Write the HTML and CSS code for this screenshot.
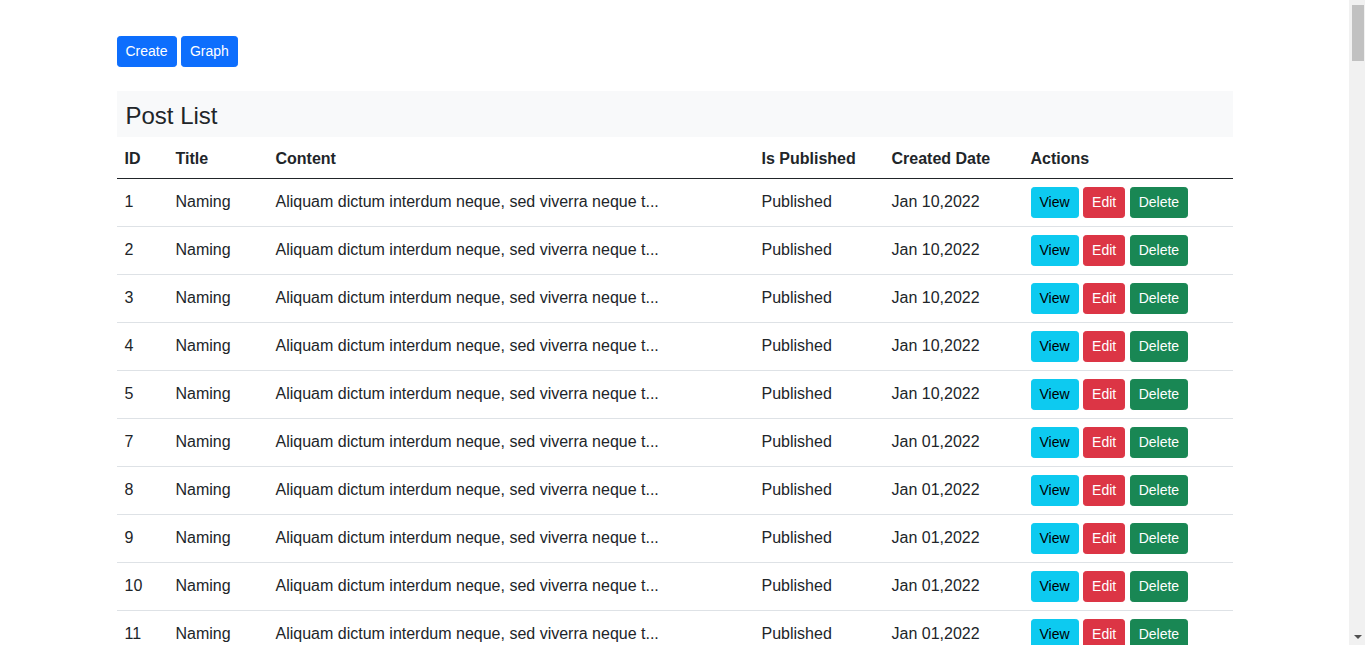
FILE: index.html
```html
<!DOCTYPE html>
<html lang="en">
<head>
<meta charset="utf-8">
<title>Post List</title>
<link rel="stylesheet" href="styles.css">
</head>
<body>
<div class="container">
  <div class="toolbar">
    <a class="btn btn-sm btn-primary" href="#">Create</a>
    <a class="btn btn-sm btn-primary" href="#">Graph</a>
  </div>
  <h4 class="panel-title">Post List</h4>
  <table class="table">
    <colgroup>
      <col class="c-id"><col class="c-title"><col class="c-content"><col class="c-pub"><col class="c-date"><col class="c-actions">
    </colgroup>
    <thead>
      <tr><th>ID</th><th>Title</th><th>Content</th><th>Is Published</th><th>Created Date</th><th>Actions</th></tr>
    </thead>
    <tbody>
      <tr><td>1</td><td>Naming</td><td>Aliquam dictum interdum neque, sed viverra neque t...</td><td>Published</td><td>Jan 10,2022</td><td><a class="btn btn-sm btn-info" href="#">View</a> <a class="btn btn-sm btn-danger" href="#">Edit</a> <a class="btn btn-sm btn-success" href="#">Delete</a></td></tr>
      <tr><td>2</td><td>Naming</td><td>Aliquam dictum interdum neque, sed viverra neque t...</td><td>Published</td><td>Jan 10,2022</td><td><a class="btn btn-sm btn-info" href="#">View</a> <a class="btn btn-sm btn-danger" href="#">Edit</a> <a class="btn btn-sm btn-success" href="#">Delete</a></td></tr>
      <tr><td>3</td><td>Naming</td><td>Aliquam dictum interdum neque, sed viverra neque t...</td><td>Published</td><td>Jan 10,2022</td><td><a class="btn btn-sm btn-info" href="#">View</a> <a class="btn btn-sm btn-danger" href="#">Edit</a> <a class="btn btn-sm btn-success" href="#">Delete</a></td></tr>
      <tr><td>4</td><td>Naming</td><td>Aliquam dictum interdum neque, sed viverra neque t...</td><td>Published</td><td>Jan 10,2022</td><td><a class="btn btn-sm btn-info" href="#">View</a> <a class="btn btn-sm btn-danger" href="#">Edit</a> <a class="btn btn-sm btn-success" href="#">Delete</a></td></tr>
      <tr><td>5</td><td>Naming</td><td>Aliquam dictum interdum neque, sed viverra neque t...</td><td>Published</td><td>Jan 10,2022</td><td><a class="btn btn-sm btn-info" href="#">View</a> <a class="btn btn-sm btn-danger" href="#">Edit</a> <a class="btn btn-sm btn-success" href="#">Delete</a></td></tr>
      <tr><td>7</td><td>Naming</td><td>Aliquam dictum interdum neque, sed viverra neque t...</td><td>Published</td><td>Jan 01,2022</td><td><a class="btn btn-sm btn-info" href="#">View</a> <a class="btn btn-sm btn-danger" href="#">Edit</a> <a class="btn btn-sm btn-success" href="#">Delete</a></td></tr>
      <tr><td>8</td><td>Naming</td><td>Aliquam dictum interdum neque, sed viverra neque t...</td><td>Published</td><td>Jan 01,2022</td><td><a class="btn btn-sm btn-info" href="#">View</a> <a class="btn btn-sm btn-danger" href="#">Edit</a> <a class="btn btn-sm btn-success" href="#">Delete</a></td></tr>
      <tr><td>9</td><td>Naming</td><td>Aliquam dictum interdum neque, sed viverra neque t...</td><td>Published</td><td>Jan 01,2022</td><td><a class="btn btn-sm btn-info" href="#">View</a> <a class="btn btn-sm btn-danger" href="#">Edit</a> <a class="btn btn-sm btn-success" href="#">Delete</a></td></tr>
      <tr><td>10</td><td>Naming</td><td>Aliquam dictum interdum neque, sed viverra neque t...</td><td>Published</td><td>Jan 01,2022</td><td><a class="btn btn-sm btn-info" href="#">View</a> <a class="btn btn-sm btn-danger" href="#">Edit</a> <a class="btn btn-sm btn-success" href="#">Delete</a></td></tr>
      <tr><td>11</td><td>Naming</td><td>Aliquam dictum interdum neque, sed viverra neque t...</td><td>Published</td><td>Jan 01,2022</td><td><a class="btn btn-sm btn-info" href="#">View</a> <a class="btn btn-sm btn-danger" href="#">Edit</a> <a class="btn btn-sm btn-success" href="#">Delete</a></td></tr>
    </tbody>
  </table>
</div>
<div class="scrollbar" aria-hidden="true">
  <div class="scroll-thumb"></div>
  <div class="scroll-arrow"></div>
</div>
</body>
</html>
```

FILE: styles.css
```css
html, body {
  margin: 0;
  padding: 0;
}
body {
  font-family: "Liberation Sans", Arial, sans-serif;
  font-size: 16px;
  line-height: 1.5;
  color: #212529;
  background: #fff;
  padding-right: 16px;
}
.container {
  max-width: 1116px;
  margin: 0 auto;
  padding: 36px 12px 0;
}
.toolbar {
  margin-bottom: 24px;
}
.btn {
  display: inline-block;
  font-size: 14px;
  line-height: 1.5;
  padding: 4px 8px;
  border: 1px solid transparent;
  border-radius: 3.2px;
  text-decoration: none;
  vertical-align: middle;
}
.btn-primary { background: #0d6efd; border-color: #0d6efd; color: #fff; }
.btn-info { background: #0dcaf0; border-color: #0dcaf0; color: #000; }
.btn-danger { background: #dc3545; border-color: #dc3545; color: #fff; }
.btn-success { background: #198754; border-color: #198754; color: #fff; }

.panel-title {
  margin: 0;
  padding: 11px 9px 6px;
  background: #f8f9fa;
  font-size: 24px;
  font-weight: 500;
  line-height: 1.2;
}
.table {
  width: 100%;
  border-collapse: collapse;
  table-layout: fixed;
  vertical-align: top;
}
.c-id { width: 51px; }
.c-title { width: 100px; }
.c-content { width: 486px; }
.c-pub { width: 130px; }
.c-date { width: 139px; }
.c-actions { width: 210px; }
.table th, .table td {
  padding: 8px;
  text-align: left;
  border-bottom: 1px solid #dee2e6;
  white-space: nowrap;
  overflow: hidden;
}
.table th {
  padding: 10px 8px 7px;
  font-weight: 700;
  border-bottom-color: #212529;
}

.scrollbar {
  position: fixed;
  top: 0;
  right: 0;
  bottom: 0;
  width: 16px;
  background: #f1f1f1;
  display: flex;
  flex-direction: column;
  align-items: center;
  justify-content: space-between;
  padding: 5px 0 6px;
  box-sizing: border-box;
}
.scroll-thumb {
  width: 12px;
  height: 56px;
  margin-left: 2px;
  background: #c1c1c1;
}
.scroll-arrow {
  width: 0;
  height: 0;
  border-left: 4px solid transparent;
  border-right: 4px solid transparent;
  border-top: 4px solid #505050;
  margin-left: 1px;
}
```
